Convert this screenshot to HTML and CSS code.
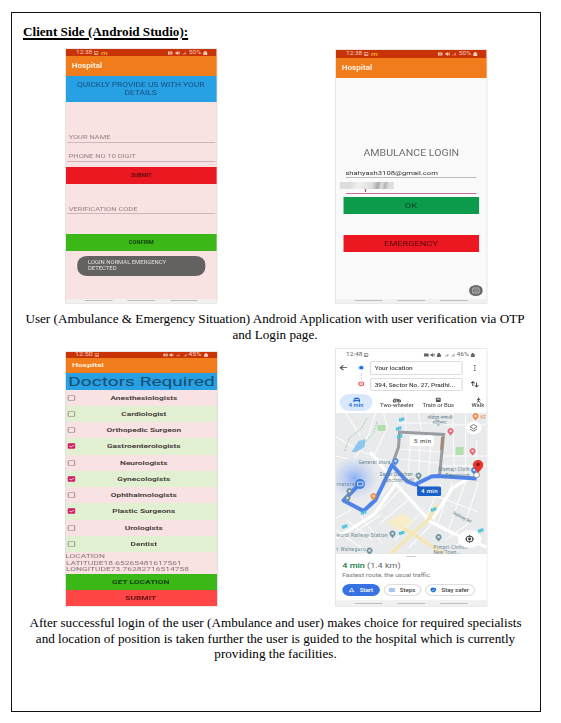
FILE: index.html
```html
<!DOCTYPE html>
<html lang="en">
<head>
<meta charset="utf-8">
<title>Client Side (Android Studio)</title>
<link rel="stylesheet" href="styles.css">
</head>
<body>
<svg width="0" height="0" class="defs">
  <defs>
    <symbol id="pic" viewBox="0 0 10 10"><path d="M1 1h8v8H1z" fill="none" stroke="currentColor" stroke-width="1.6"/><path d="M2 8l2-3 2 2 1-1 1.500 2z" fill="currentColor"/></symbol>
    <symbol id="alarm" viewBox="0 0 10 10"><path d="M0 1h10v8H0z" fill="currentColor"/><circle cx="5" cy="5" r="2" fill="none" stroke="#a43" stroke-width="1"/></symbol>
    <symbol id="mute" viewBox="0 0 10 10"><path d="M0 3h2l4-3v10L2 7H0zM7 2h2v6H7z" fill="currentColor"/></symbol>
    <symbol id="sig" viewBox="0 0 10 10"><path d="M1 9h8V1z" fill="currentColor" opacity=".5"/></symbol>
    <symbol id="bat" viewBox="0 0 10 10"><path d="M3 0h4v3h2v7H1V3h2z" fill="currentColor"/></symbol>
    <symbol id="tick" viewBox="0 0 10 10"><rect width="10" height="10" rx="1.500" fill="#d01a63"/><path d="M2 4.500l2.500 2.500L8.500 3" fill="none" stroke="#f7c3d6" stroke-width="1.300"/></symbol>
    <symbol id="box" viewBox="0 0 10 10"><rect x=".7" y=".7" width="8.600" height="8.600" rx="1" fill="none" stroke="#857676" stroke-width="1.300"/></symbol>
  </defs>
</svg>
<main class="page">
  <h1>Client Side (Android Studio):</h1>

  <section class="shots first">
    <div class="phone verify">
      <div class="screen">
        <div class="status"><span>12:38</span><svg><use href="#pic"/></svg><b class="m">m</b><i></i><svg><use href="#alarm"/></svg><svg><use href="#mute"/></svg><svg><use href="#sig"/></svg><span>50%</span><svg><use href="#bat"/></svg></div>
        <div class="appbar">Hospital</div>
        <div class="banner">QUICKLY PROVIDE US WITH YOUR<br>DETAILS</div>
        <div class="field name">YOUR NAME</div>
        <div class="field tel">PHONE NO 10 DIGIT</div>
        <div class="btn red">SUBMIT</div>
        <div class="field code">VERIFICATION CODE</div>
        <div class="btn green">CONFIRM</div>
        <div class="toast">LOGIN NORMAL EMERGENCY<br>DETECTED</div>
        <div class="nav"><i></i><i></i><i></i></div>
      </div>
    </div>
    <div class="phone login">
      <div class="screen">
        <div class="status"><span>12:38</span><svg><use href="#pic"/></svg><b class="m">m</b><i></i><svg><use href="#alarm"/></svg><svg><use href="#mute"/></svg><svg><use href="#sig"/></svg><span>50%</span><svg><use href="#bat"/></svg></div>
        <div class="appbar">Hospital</div>
        <div class="title">AMBULANCE LOGIN</div>
        <div class="email">shahyash3108@gmail.com</div>
        <div class="password"><div class="smudge"></div><div class="caret"></div></div>
        <div class="btn ok">OK</div>
        <div class="btn emergency">EMERGENCY</div>
        <div class="float"><svg viewBox="0 0 11 11"><circle cx="5.500" cy="5.500" r="5.500" fill="#6b6b6b"/><path d="M3 3h5v5H3z" fill="none" stroke="#ccc" stroke-width=".7"/><path d="M4 6.800h3M4.500 4.500h2v1.500h-2z" fill="none" stroke="#bbb" stroke-width=".4"/></svg></div>
        <div class="nav"><i></i><i></i><i></i></div>
      </div>
    </div>
  </section>

  <p class="caption one">User (Ambulance &amp; Emergency Situation) Android Application with user verification via OTP<br>and Login page.</p>

  <section class="shots second">
    <div class="phone doctors">
      <div class="screen">
        <div class="status"><span>12:50</span><svg><use href="#pic"/></svg><i></i><svg><use href="#alarm"/></svg><svg><use href="#mute"/></svg><svg><use href="#sig"/></svg><svg><use href="#sig"/></svg><span>45%</span><svg><use href="#bat"/></svg></div>
        <div class="appbar">Hospital</div>
        <div class="banner">Doctors Required</div>
        <div class="row"><svg><use href="#box"/></svg><b>Anesthesiologists</b></div>
        <div class="row"><svg><use href="#box"/></svg><b>Cardiologist</b></div>
        <div class="row"><svg><use href="#box"/></svg><b>Orthopedic Surgeon</b></div>
        <div class="row"><svg><use href="#tick"/></svg><b>Gastroenterologists</b></div>
        <div class="row"><svg><use href="#box"/></svg><b>Neurologists</b></div>
        <div class="row"><svg><use href="#tick"/></svg><b>Gynecologists</b></div>
        <div class="row"><svg><use href="#box"/></svg><b>Ophthalmologists</b></div>
        <div class="row"><svg><use href="#tick"/></svg><b>Plastic Surgeons</b></div>
        <div class="row"><svg><use href="#box"/></svg><b>Urologists</b></div>
        <div class="row"><svg><use href="#box"/></svg><b>Dentist</b></div>
        <div class="location">LOCATION<br>LATITUDE18.65265481617561<br>LONGITUDE73.76282716514758</div>
        <div class="btn green">GET LOCATION</div>
        <div class="btn coral">SUBMIT</div>
      </div>
    </div>
    <div class="phone route">
      <div class="screen">
        <div class="status"><span>12:48</span><svg><use href="#pic"/></svg><i></i><svg><use href="#alarm"/></svg><svg><use href="#mute"/></svg><svg><use href="#bat"/></svg><svg><use href="#sig"/></svg><svg><use href="#sig"/></svg><span>46%</span><svg><use href="#bat"/></svg></div>
        <div class="search">
          <svg class="ends" viewBox="0 0 27 32"><path d="M9 7.500H3.500M6 5L3.500 7.500L6 10" fill="none" stroke="#444" stroke-width=".9"/><circle cx="20.500" cy="7.500" r="2.700" fill="#d6e5fc"/><circle cx="20.500" cy="7.500" r="1.600" fill="#1a6be0"/><path d="M20.500 13v7" stroke="#999" stroke-width=".7" stroke-dasharray=".8 1.300"/><circle cx="20.500" cy="24" r="2" fill="none" stroke="#d55" stroke-width=".9"/><circle cx="20.500" cy="24" r=".7" fill="#d55"/></svg>
          <div class="inputs"><div>Your location</div><div>394, Sector No. 27, Pradhi...</div></div>
          <svg class="tools" viewBox="0 0 18 32"><path d="M9.500 5v1.200M9.500 7.400v1.200M9.500 9.800V11" stroke="#555" stroke-width="1.200"/><path d="M8 26v-4M6.500 23.300L8 21.700l1.500 1.600M11 22.500v4.200M9.500 25.300L11 26.900l1.500-1.600" fill="none" stroke="#444" stroke-width=".8"/></svg>
        </div>
        <div class="modes">
          <div class="active"><svg viewBox="0 0 8 6"><path d="M1 5.500V3L2 .5h4L7 3v2.500H6v-1H2v1z" fill="#1b67d2"/><path d="M2 2.500h4" stroke="#d6e6fd" stroke-width=".8"/></svg>4 min</div>
          <div><svg viewBox="0 0 8 6"><circle cx="2" cy="4" r="1.300" fill="none" stroke="#444"/><circle cx="6" cy="4" r="1.300" fill="none" stroke="#444"/><path d="M1 2h3l2 2" stroke="#444" fill="none"/></svg>Two-wheeler</div>
          <div><svg viewBox="0 0 8 6"><rect x="1.800" y=".3" width="4.400" height="5" rx="1" fill="#555"/><path d="M2.700 1.500h2.600v1.300H2.700z" fill="#ddd"/></svg>Train or Bus</div>
          <div><svg viewBox="0 0 8 6"><circle cx="4.200" cy=".8" r=".8" fill="#444"/><path d="M4 1.500v2.300L3 6M4 3.800L5.500 6M2.500 3l1.500-1 1.800 1" fill="none" stroke="#444" stroke-width=".9"/></svg>Walk</div>
        </div>
        <svg class="map" viewBox="335.500 413 150.500 141" preserveAspectRatio="none">
          <defs><radialGradient id="glow"><stop offset="0" stop-color="#8cb0f4"/><stop offset="1" stop-color="#b9cdf5" stop-opacity="0"/></radialGradient>
          <g id="stop"><path d="M-2.600-1.500h2.800v3h-2.800zM0-2.500h2.800v3H0z" fill="#3cbcd6"/><path d="M-1.800 0h1M.8-1h1" stroke="#fff" stroke-width=".6"/></g>
          <g id="pin"><path d="M0 3.500L-2 1.200A2.900 2.900 0 1 1 2 1.200z"/><circle cy="-1" r="1.200" fill="#fff" opacity=".75"/></g></defs>
          <rect x="335" y="413" width="152" height="142" fill="#e9eaec"/>
          <g fill="none" stroke="#fbfbfb" stroke-width="1.100">
            <path d="M336 437l20 12 23 10 15 5M345 413l15 23M375 413l-7 22-14 24M383 413l4 14-13 28M336 456l12 3M400 449l40 3M400 459l39 4M410 432l-2 43M420 433l-2 45M431 434l-3 41M443 456h43M441 466h45M452 413l2 65M465 413v66M476 440v38M443 425h43M405 413v20M418 413l3 19M398 423h44"/>
            <path d="M372 505l20-23M380 510l19-20M380 523l30-25M395 540l29-32M408 548l27-28M440 484l-17 39M452 482l-15 42M465 482l-18 50M478 482l-12 37M420 490l58 22M350 510l-14 8M346 520l26 20M355 532l25-17M336 530l28 20M445 540l25-18M452 548l24-17M360 516l22 28"/>
          </g>
          <path d="M336 538l38-24 23-33M370 452l22 28 38 42 22 11 34 14M432 519l20-31 20-12" fill="none" stroke="#fff" stroke-width="3.200"/>
          <path d="M390 554l39-36 8-14M395 523l49 31" fill="none" stroke="#f5e7b5" stroke-width="3.500"/>
          <path d="M386 523l15 8 12-10-12-8z" fill="#f7edc9"/>
          <path d="M351 452l7-11 7-2-1 8-8 5z" fill="#8ec6f0"/>
          <path d="M377 425h8v6h-8zM455 447h8v8h-8z" fill="#b2dfad"/>
          <path d="M344 451l5-13 12-10 6-11M361 446l12-13 4-12" fill="none" stroke="#91cda0" stroke-width=".8" stroke-dasharray="2 1"/>
          <ellipse cx="354" cy="478" rx="25" ry="22" fill="url(#glow)"/>
          <path d="M392 464l6-17 1-15 44 2.500-4 41" fill="none" stroke="#999da2" stroke-width="3"/>
          <path d="M442 437l-1 13" stroke="#a98874" stroke-width="3"/>
          <path d="M476 478.500l-39-2.500-6 .5-16.500 8-8-3-15-16.500-5.500 12-11 23-12 11-20-10.500 15-15.500" fill="none" stroke="#4e83ea" stroke-width="4" stroke-linejoin="round"/>
          <g class="labels">
            <text x="427" y="419">नॉर्थवूड संभाजी</text><text x="432" y="424.500">शाहूनगर</text>
            <text x="358" y="464.500" textLength="32">General store</text>
            <text x="379" y="476.500" textLength="33">Sagar Darshan</text><text x="382" y="482" textLength="31">Junction Hall</text>
            <text x="336" y="486" textLength="18">inatore</text>
            <text x="438" y="471.500" textLength="31">Mamaji Cloth</text><text x="445" y="477" textLength="24">Emporium</text>
            <text x="336" y="537" textLength="51">wurdi Railway Station</text>
            <text x="336" y="551.500" textLength="29">t Waheguru</text>
            <text x="433" y="549" textLength="34">Pimpri Chinch</text><text x="433" y="553.700" textLength="27">New Town...</text>
            <text x="452" y="514" textLength="20" transform="rotate(27 452 514)">Railway Rd</text>
            <text x="480" y="419" class="food">KF</text>
          </g>
          <use href="#stop" x="401" y="420"/><use href="#stop" x="398" y="429"/><use href="#stop" x="399" y="437"/><use href="#stop" x="363" y="513"/><use href="#stop" x="344" y="527"/><use href="#stop" x="401" y="533.500"/><use href="#stop" x="433" y="510"/><use href="#stop" x="480" y="531"/>
          <use href="#pin" x="475" y="417" fill="#ef8a48"/><use href="#pin" x="373" y="497" fill="#ef8a48"/>
          <use href="#pin" x="450" y="432" fill="#e86674"/><use href="#pin" x="472" y="452" fill="#e86674"/>
          <use href="#pin" x="395" y="462" fill="#4c8fe0"/><use href="#pin" x="473.500" y="471" fill="#3e86e4"/>
          <g fill="#6f929e"><use href="#pin" x="418" y="476.500"/><use href="#pin" x="349" y="492"/><use href="#pin" x="347" y="499"/><use href="#pin" x="392" y="534.500"/><use href="#pin" x="369" y="551.500"/><use href="#pin" x="438" y="538"/></g>
          <circle cx="359.500" cy="484" r="5" fill="#3e7cdf"/><rect x="357" y="482" width="5.500" height="3.800" rx=".5" fill="none" stroke="#fff" stroke-width=".8"/>
          <rect x="409.500" y="435.500" width="24" height="10.500" rx="2" fill="#fff"/><text class="mins" x="413.500" y="443.200" textLength="17">5 min</text>
          <rect x="416.500" y="486.500" width="24" height="9.500" rx="1.500" fill="#1b60c9"/><path d="M415 484l7 4h-5z" fill="#1b60c9"/><text class="mins sel" x="420.500" y="493.500" textLength="16.500">4 min</text>
          <ellipse cx="473" cy="428" rx="8" ry="6.500" fill="#fff"/><path d="M473 424.500l3.500 2.200-3.500 2.200-3.500-2.200zM469.500 429l3.500 2.200 3.500-2.200" fill="none" stroke="#555" stroke-width=".8"/>
          <ellipse cx="469" cy="539" rx="11.500" ry="9" fill="#fff"/><ellipse cx="469" cy="539" rx="3.200" ry="2.800" fill="none" stroke="#444" stroke-width="1"/><circle cx="469" cy="539" r="1.400" fill="#333"/><path d="M464.500 539h1.500M472 539h1.500M469 535v1.500M469 541.500v1.500" stroke="#444" stroke-width=".9"/>
          <ellipse cx="476" cy="475" rx="3" ry="2.500" fill="#fff" stroke="#777" stroke-width=".7"/>
          <path d="M477.500 473.500c-1-3-5.200-5-5.200-8.800a5.200 4.700 0 0 1 10.400 0c0 3.800-4.200 5.800-5.200 8.800z" fill="#e6362e"/><circle cx="477.500" cy="464.500" r="1.700" fill="#8f1410"/>
        </svg>
        <div class="sheet">
          <div class="handle"></div>
          <div class="eta"><b>4 min</b> (1.4 km)</div>
          <div class="via">Fastest route, the usual traffic</div>
          <div class="actions">
            <span class="start"><svg viewBox="0 0 6 6"><path d="M3 .6L5.300 5.300 3 4.300.7 5.300z" fill="none" stroke="#fff" stroke-width=".8"/></svg>Start</span>
            <span class="steps"><svg viewBox="0 0 6 6"><path d="M0 1.500h6M0 3h6M0 4.500h6" stroke="#4a80dc" stroke-width=".7"/></svg>Steps</span>
            <span class="safer"><svg viewBox="0 0 6 6"><path d="M3 0l2.600 1v2C5.600 4.500 4.500 5.500 3 6 1.500 5.500.4 4.500.4 3V1z" fill="#1a6bd8"/><path d="M1.800 3l.9.900 1.600-1.700" fill="none" stroke="#fff" stroke-width=".7"/></svg>Stay safer</span>
          </div>
        </div>
        <div class="nav"><i></i><i></i><i></i></div>
      </div>
    </div>
  </section>

  <p class="caption two">After successful login of the user (Ambulance and user) makes choice for required specialists<br>and location of position is taken further the user is guided to the hospital which is currently<br>providing the facilities.</p>
</main>
</body>
</html>
```
FILE: styles.css
```css
* { box-sizing: border-box; }
body { margin: 0; background: #fff; font-family: "Liberation Serif", serif; color: #000; }
.defs { display: none; }
.page { width: 530px; height: 700px; margin: 12px 0 0 11px; border: 1px solid #111; }
h1 { margin: 11px 0 0 11px; height: 25px; font-size: 13.150px; line-height: 16px; text-decoration: underline; text-decoration-thickness: 1.500px; text-underline-offset: 2px; }
.caption { margin: 0 2px 0 0; font-size: 13.170px; line-height: 15.500px; text-align: center; white-space: nowrap; }
.caption.one { padding-top: 8px; height: 46px; line-height: 16px; }
.caption.two { padding-top: 9px; margin-right: 1px; }
.shots { display: flex; gap: 119px; padding-left: 53.500px; align-items: flex-end; }
.phone { width: 151px; height: 254px; font-family: Roboto, sans-serif; flex: none; filter: blur(.25px); }
.screen { width: 120px; height: 100%; transform: scaleX(1.255); transform-origin: 0 0; overflow: hidden; display: flex; flex-direction: column; background: #fafafa; box-shadow: 0 0 0 .6px #dcdcdc; }
.screen > * { flex: none; }

.status { height: 8px; background: #c93407; color: #f6cdbd; display: flex; align-items: center; gap: 1.500px; padding: 0 7px 0 8px; font-size: 5.200px; line-height: 1; }
.status svg { width: 4px; height: 4px; }
.status i { flex: 1; }
.status .m { color: #f4b12a; font-size: 6px; font-weight: 500; line-height: 4px; }
.appbar { height: 19.500px; line-height: 20px; padding-left: 4.500px; background: #f07c1c; color: #fff0df; font-size: 6.500px; font-weight: 700; }
.btn { height: 17px; line-height: 17px; text-align: center; font-weight: 700; }
.red { background: #eb1822; color: #5c0a10; }
.green { background: #3cb718; color: #123f08; }
.nav { height: 4.500px; background: #f1f1f1; display: flex; justify-content: center; align-items: center; gap: 11.500px; margin-top: auto; }
.nav i { width: 22.500px; height: 1px; background: #bdbdbd; }

.verify .screen { background: #f9e2e2; }
.verify .status { height: 7px; }
.verify .banner { height: 26.500px; padding: 5px 1px 0 0; background: #28a0e4; color: #15527c; font-size: 6.700px; line-height: 8.200px; text-align: center; white-space: nowrap; }
.field { margin: 0 .8px; padding-left: 1.300px; border-bottom: 1px solid #cfb6b6; color: #978283; font-size: 5.950px; line-height: 8px; }
.name { margin-top: 30.500px; height: 10px; }
.tel { margin-top: 9px; height: 10px; }
.verify .btn { font-size: 4.500px; line-height: 18px; }
.verify .red { margin-top: 5.500px; }
.code { margin-top: 20px; height: 9.500px; line-height: 9px; }
.verify .green { margin-top: 20px; }
.toast { margin: 5px 9px 0; height: 20px; border-radius: 8px; background: #646261; color: #e0e0e0; font-size: 4.700px; line-height: 5.600px; padding: 4.700px 8.500px; white-space: nowrap; }

.login { height: 253px; }
.title { margin-top: 69px; height: 13px; line-height: 13px; font-size: 8.450px; color: #6e6e6e; text-align: center; white-space: nowrap; }
.email { margin: 8px 8px 0 7.500px; height: 10.500px; border-bottom: 1px solid #bbb; font-size: 6.100px; line-height: 9px; color: #333; }
.password { margin: 4px 8px 0 2.500px; height: 12px; display: flex; flex-direction: column; }
.password::after { content: ""; height: 1.500px; margin: auto 0 0 5px; background: #c06f9c; }
.smudge { width: 43px; height: 7px; background: linear-gradient(100deg, #ddd 0 20%, #f0f0ee 35%, #ddd 60%, #aaa 70%, #ddd 77%, #b5b5b5 83%, #ddd 90%); }
.caret { margin-left: 20.500px; width: .8px; height: 3px; background: #b45088; }
.login .btn { margin: 0 6.500px 0 6px; font-size: 7.400px; font-weight: 400; }
.login .ok { background: #0c9a4b; color: #073d20; margin-top: 2.500px; }
.login .emergency { background: #eb1822; color: #5c0a10; margin-top: 21px; }
.float { margin: auto 3px 2.500px auto; height: 11px; }
.float svg { display: block; width: 11px; height: 11px; }
.login .nav { margin-top: 0; }

.shots.second { height: 257px; }
.doctors .screen { width: 101px; transform: scaleX(1.495); background: #f9e2e2; }
.doctors .status { height: 6px; padding: 0 6px; font-size: 4.800px; gap: 1px; }
.doctors .status svg { width: 3.300px; }
.doctors .appbar { height: 15px; line-height: 15px; padding-left: 4px; font-size: 5.700px; }
.doctors .banner { height: 16.500px; line-height: 17.500px; background: #28a0e4; color: #174d70; font-size: 12.750px; text-align: center; white-space: nowrap; }
.row { height: 16.250px; display: flex; align-items: center; padding-left: 1.300px; background: #f9e2e3; font-size: 5.550px; color: #3d3434; }
.row:nth-child(odd) { background: #e2f0d2; }
.row b { flex: 1; text-align: center; font-weight: 600; padding-right: 1.500px; }
.row svg { width: 5.300px; height: 6px; overflow: visible; }
.row b { padding: 0 0 0 0; margin-left: -1.500px; padding-right: 2px; }
.location { height: 21.500px; padding-top: 1px; font-size: 5.650px; line-height: 6.600px; color: #85757a; white-space: nowrap; text-indent: -.5px; }
.doctors .btn { height: 16.300px; line-height: 16.800px; font-size: 5.600px; padding-right: 1px; }
.coral { background: #ff4545; color: #651111; }

.route { height: 257px; }
.route .screen { background: #fff; }
.route .status { background: #fff; color: #666; height: 11px; font-size: 5.300px; padding-right: 9px; gap: 1.200px; }
.search { height: 34px; display: flex; }
.ends { width: 26.500px; height: 32px; }
.tools { width: 18px; height: 32px; }
.inputs { width: 74.500px; padding-top: 1.300px; display: grid; gap: 3px; align-content: start; }
.inputs div { height: 13.500px; line-height: 12.500px; padding-left: 3.300px; border: .7px solid #ddd; border-radius: 2px; font-size: 5.150px; color: #444; white-space: nowrap; font-weight: 500; }
.modes { height: 19px; display: flex; gap: 6px; padding-left: 3px; font-size: 4.700px; font-weight: 500; color: #555; overflow: hidden; }
.modes div { flex: none; width: 27px; height: 17px; padding-top: 2.500px; display: flex; flex-direction: column; align-items: center; line-height: 6.500px; white-space: nowrap; }
.modes svg { width: 7px; height: 6px; }
.modes .active { background: #d9e8fd; border-radius: 8px; color: #1b67d2; width: 26px; }
.modes div:last-child { width: 24px; }
.map { display: block; width: 120px; height: 141px; }
.labels { font: 4.600px Roboto, "Noto Sans", sans-serif; fill: #60818c; }
.food { fill: #e2803c; }
.mins { font: 500 6px Roboto, sans-serif; fill: #555; }
.mins.sel { fill: #fff; }
.sheet { height: 46px; background: #fff; padding: 2px 5px 0; }
.handle { width: 8px; height: 1px; background: #ccc; margin: 0 auto; }
.eta { margin-top: 3px; height: 10px; line-height: 11px; font-size: 7.200px; color: #666; }
.eta b { color: #188046; font-weight: 500; }
.via { height: 10px; line-height: 10.500px; font-size: 5.300px; color: #777; }
.actions { display: flex; gap: 3px; margin-top: 3.500px; font-size: 4.900px; font-weight: 500; color: #444; }
.actions span { height: 12.500px; border: .7px solid #ddd; border-radius: 7px; display: flex; align-items: center; justify-content: center; gap: 4px; white-space: nowrap; }
.actions svg { width: 5px; height: 6px; }
.actions .start { width: 29.500px; background: #3672e2; border-color: #3672e2; color: #fff; }
.steps { width: 30px; }
.safer { width: 40px; }
.route .nav { height: 6px; }
```
